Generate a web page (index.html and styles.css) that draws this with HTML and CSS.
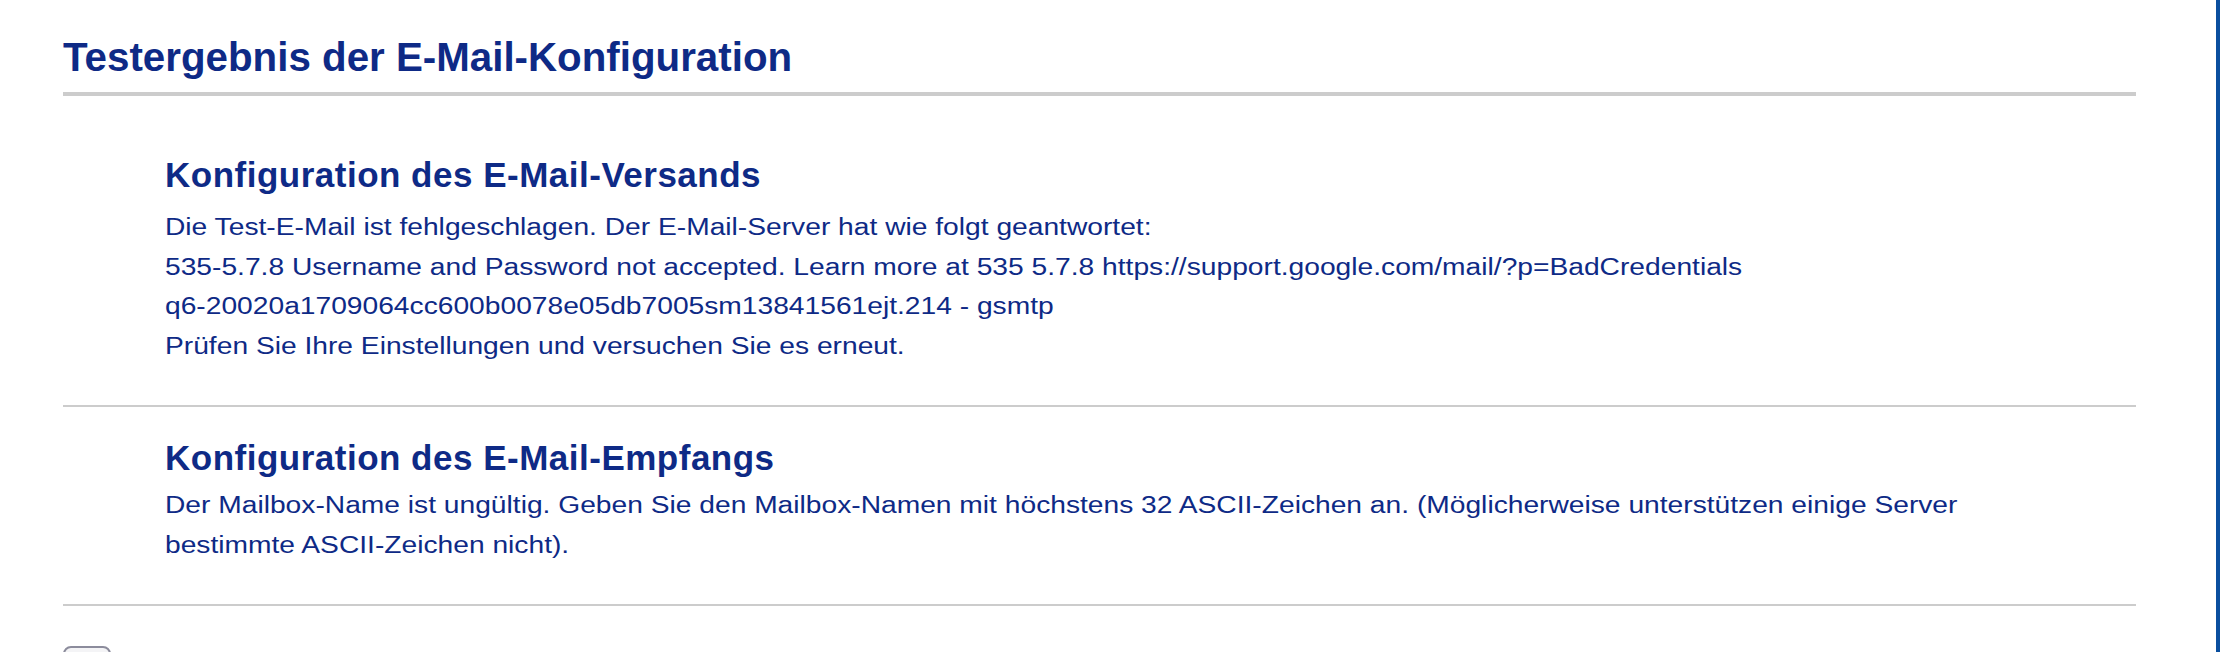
FILE: index.html
```html
<!DOCTYPE html>
<html lang="de">
<head>
<meta charset="utf-8">
<title>Testergebnis der E-Mail-Konfiguration</title>
<link rel="stylesheet" href="styles.css">
</head>
<body>
<div class="frame">
  <main class="page">
    <h1 class="page-title">Testergebnis der E-Mail-Konfiguration</h1>
    <section class="result result-send">
      <h2 class="result-title">Konfiguration des E-Mail-Versands</h2>
      <p class="result-text">Die Test-E-Mail ist fehlgeschlagen. Der E-Mail-Server hat wie folgt geantwortet:<br>535-5.7.8 Username and Password not accepted. Learn more at 535 5.7.8 https://support.google.com/mail/?p=BadCredentials<br>q6-20020a1709064cc600b0078e05db7005sm13841561ejt.214 - gsmtp<br>Prüfen Sie Ihre Einstellungen und versuchen Sie es erneut.</p>
    </section>
    <section class="result result-receive">
      <h2 class="result-title">Konfiguration des E-Mail-Empfangs</h2>
      <p class="result-text">Der Mailbox-Name ist ungültig. Geben Sie den Mailbox-Namen mit höchstens 32 ASCII-Zeichen an. (Möglicherweise unterstützen einige Server bestimmte ASCII-Zeichen nicht).</p>
    </section>
    <div class="actions">
      <button class="btn" type="button" aria-label="OK"></button>
    </div>
  </main>
  <div class="edge"></div>
</div>
</body>
</html>
```
FILE: styles.css
```css
html, body {
  margin: 0;
  padding: 0;
  background: #ffffff;
}

body {
  font-family: "Liberation Sans", Arial, sans-serif;
  color: #0e2a86;
  overflow: hidden;
}

.frame {
  display: flex;
  min-height: 100vh;
}

.page {
  flex: 1;
  padding: 0 80px 0 63px;
}

.edge {
  width: 4px;
  background: #0a4f9f;
}

.page-title {
  margin: 34px 0 0;
  width: 2073px;
  font-size: 40.3px;
  line-height: 48px;
  font-weight: bold;
  padding-bottom: 10px;
  border-bottom: 4px solid #cccccc;
}

.result {
  width: 2073px;
  box-sizing: border-box;
  padding: 31px 102px 39px;
  border-bottom: 2px solid #cccccc;
}

.result-send {
  padding-top: 59px;
}

.result-title {
  margin: 0 0 9px;
  font-size: 35px;
  letter-spacing: 0.5px;
  line-height: 40px;
  font-weight: bold;
}

.result-send .result-title {
  margin-bottom: 13px;
}

.result-receive .result-title {
  margin-bottom: 8px;
}

.result-text {
  margin: 0;
  width: 1550px;
  font-size: 23.3px;
  line-height: 39.5px;
  transform: scaleX(1.21);
  transform-origin: left top;
}

.actions {
  padding-top: 40px;
}

.btn {
  display: block;
  width: 48px;
  height: 40px;
  border: 2px solid #8c8c9c;
  border-radius: 8px;
  background: #f4f4f6;
}
```
